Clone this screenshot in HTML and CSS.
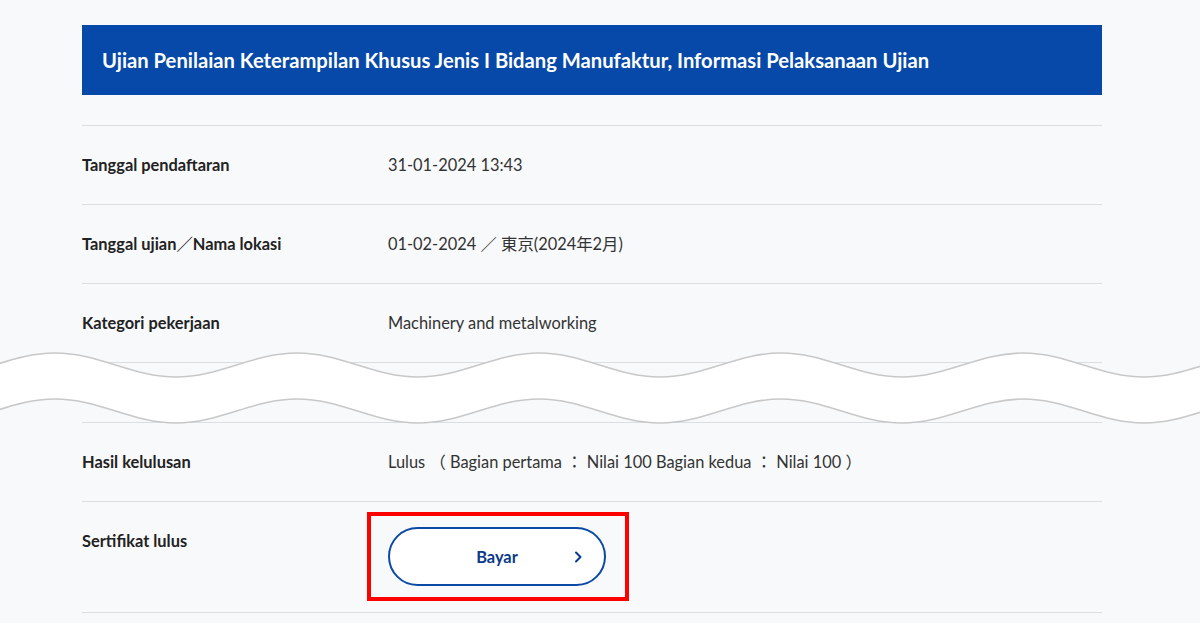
FILE: index.html
```html
<!DOCTYPE html>
<html lang="id">
<head>
  <meta charset="UTF-8">
  <meta name="viewport" content="width=device-width, initial-scale=1.0">
  <title>Informasi Pelaksanaan Ujian</title>
  <link rel="stylesheet" href="styles.css">
</head>
<body>
  <div class="page">
    <h1 class="title">Ujian Penilaian Keterampilan Khusus Jenis I Bidang Manufaktur, Informasi Pelaksanaan Ujian</h1>

    <div class="info">
      <div class="row">
        <div class="label">Tanggal pendaftaran</div>
        <div class="value">31-01-2024 13:43</div>
      </div>
      <div class="row">
        <div class="label">Tanggal ujian／Nama lokasi</div>
        <div class="value">01-02-2024 ／ 東京(2024年2月)</div>
      </div>
      <div class="row">
        <div class="label">Kategori pekerjaan</div>
        <div class="value">Machinery and metalworking</div>
      </div>

      <!-- omitted rows -->
      <div class="cut">
        <svg class="wave" width="1200" height="78" viewBox="0 0 1200 78">
          <path fill="#fff" d="M-187 3 c44 0 77 24 121 24 c44 0 77 -24 121 -24 c44 0 77 24 121 24 c44 0 77 -24 121 -24 c44 0 77 24 121 24 c44 0 77 -24 121 -24 c44 0 77 24 121 24 c44 0 77 -24 121 -24 c44 0 77 24 121 24 c44 0 77 -24 121 -24 c44 0 77 24 121 24 c44 0 77 -24 121 -24 L1265 49 c-44 0 -77 24 -121 24 c-44 0 -77 -24 -121 -24 c-44 0 -77 24 -121 24 c-44 0 -77 -24 -121 -24 c-44 0 -77 24 -121 24 c-44 0 -77 -24 -121 -24 c-44 0 -77 24 -121 24 c-44 0 -77 -24 -121 -24 c-44 0 -77 24 -121 24 c-44 0 -77 -24 -121 -24 c-44 0 -77 24 -121 24 c-44 0 -77 -24 -121 -24 Z"/>
          <path class="wave-line" d="M-187 3 c44 0 77 24 121 24 c44 0 77 -24 121 -24 c44 0 77 24 121 24 c44 0 77 -24 121 -24 c44 0 77 24 121 24 c44 0 77 -24 121 -24 c44 0 77 24 121 24 c44 0 77 -24 121 -24 c44 0 77 24 121 24 c44 0 77 -24 121 -24 c44 0 77 24 121 24 c44 0 77 -24 121 -24"/>
          <path class="wave-line" d="M-187 49 c44 0 77 24 121 24 c44 0 77 -24 121 -24 c44 0 77 24 121 24 c44 0 77 -24 121 -24 c44 0 77 24 121 24 c44 0 77 -24 121 -24 c44 0 77 24 121 24 c44 0 77 -24 121 -24 c44 0 77 24 121 24 c44 0 77 -24 121 -24 c44 0 77 24 121 24 c44 0 77 -24 121 -24"/>
        </svg>
      </div>

      <div class="row">
        <div class="label">Hasil kelulusan</div>
        <div class="value">Lulus （ Bagian pertama ： Nilai 100 Bagian kedua ： Nilai 100 ）</div>
      </div>
      <div class="row row-top">
        <div class="label label-top">Sertifikat lulus</div>
        <div class="value">
          <div class="btn-wrap">
            <button type="button" class="btn-pay">
              <span></span>
              <span class="btn-text">Bayar</span>
              <svg class="chevron" width="8" height="12" viewBox="0 0 8 12"><path d="M2 1.5 L6.5 6 L2 10.5"/></svg>
            </button>
            <div class="mark"></div>
          </div>
        </div>
      </div>
    </div>
  </div>
</body>
</html>
```

FILE: styles.css
```css
body {
  margin: 0;
  padding: 25px 16px 0 0;
  background: #f8f9fb;
  font-family: Lato, "Noto Sans CJK JP", sans-serif;
  color: #222;
  overflow: hidden;
}
.page {
  width: 1020px;
  margin: 0 auto;
}
.title {
  margin: 0;
  height: 70px;
  display: flex;
  align-items: center;
  padding: 0 20px;
  background: #0749a8;
  color: #fff;
  font-size: 20.2px;
  font-weight: 700;
}
.info {
  margin-top: 30px;
  border-top: 1px solid #dcdde0;
}
.row {
  display: grid;
  grid-template-columns: 306px 1fr;
  align-items: center;
  padding: 27px 0;
  line-height: 24px;
  font-size: 16.4px;
  border-bottom: 1px solid #dcdde0;
}
.row-top {
  align-items: start;
  padding: 25px 0 26px;
}
.label {
  font-weight: 700;
  color: #222;
}
.label-top {
  padding-top: 2px;
}
.value {
  color: #333;
}
.cut {
  position: relative;
  height: 59px;
  border-bottom: 1px solid #dcdde0;
}
.wave {
  position: absolute;
  left: -82px;
  top: -13px;
  display: block;
}
.wave-line {
  fill: none;
  stroke: #c8c8c8;
  stroke-width: 1.6;
}
.btn-wrap {
  position: relative;
  width: 218px;
}
.btn-pay {
  display: grid;
  grid-template-columns: 1fr auto 1fr;
  align-items: center;
  width: 218px;
  height: 59px;
  padding: 0 22px;
  border: 2px solid #0a4aa6;
  border-radius: 30px;
  background: #fff;
  color: #0b3a88;
  font-family: inherit;
  font-size: 16.4px;
  font-weight: 700;
  cursor: pointer;
}
.chevron {
  justify-self: end;
}
.chevron path {
  fill: none;
  stroke: #0b3a88;
  stroke-width: 2;
  stroke-linecap: round;
  stroke-linejoin: round;
}
.mark {
  position: absolute;
  top: -15px;
  right: -23px;
  bottom: -15px;
  left: -21px;
  border: 4px solid #f00;
  pointer-events: none;
}
```
